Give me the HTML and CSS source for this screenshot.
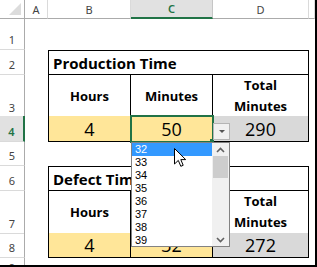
FILE: index.html
```html
<!DOCTYPE html>
<html lang="en">
<head>
    <meta charset="UTF-8">
    <title>Production Time - Drop Down</title>
    <link rel="stylesheet" href="styles.css">
</head>
<body>
    <div class="frame">
        <div class="sheet">
            <!-- column headers -->
            <div class="row row-hd">
                <div class="corner"><span class="corner-tri"></span></div>
                <div class="ch">A</div>
                <div class="ch">B</div>
                <div class="ch ch-active">C</div>
                <div class="ch">D</div>
                <div class="ch"></div>
            </div>

            <div class="row h-r1">
                <div class="rh">1</div>
                <div></div><div></div><div></div><div></div><div></div>
            </div>

            <!-- Production Time -->
            <div class="row h-title">
                <div class="rh">2</div>
                <div></div>
                <div class="tc tc-first tc-top title">Production Time</div>
                <div></div>
            </div>
            <div class="row h-head">
                <div class="rh">3</div>
                <div></div>
                <div class="tc tc-first label">Hours</div>
                <div class="tc label">Minutes</div>
                <div class="tc label">Total<br>Minutes</div>
                <div></div>
            </div>
            <div class="row h-val">
                <div class="rh rh-active">4</div>
                <div></div>
                <div class="tc tc-first val input">4</div>
                <div class="tc val input selected">50</div>
                <div class="tc val calc">290</div>
                <div></div>
            </div>

            <div class="row h-r5">
                <div class="rh">5</div>
                <div></div><div></div><div></div><div></div><div></div>
            </div>

            <!-- Defect Time -->
            <div class="row h-title">
                <div class="rh">6</div>
                <div></div>
                <div class="tc tc-first tc-top title">Defect Time</div>
                <div></div>
            </div>
            <div class="row h-head2">
                <div class="rh">7</div>
                <div></div>
                <div class="tc tc-first label">Hours</div>
                <div class="tc label">Minutes</div>
                <div class="tc label">Total<br>Minutes</div>
                <div></div>
            </div>
            <div class="row h-val2">
                <div class="rh">8</div>
                <div></div>
                <div class="tc tc-first val input">4</div>
                <div class="tc val input">32</div>
                <div class="tc val calc">272</div>
                <div></div>
            </div>
            <div class="row h-r9">
                <div class="rh">9</div>
                <div></div><div></div><div></div><div></div><div></div>
            </div>
        </div>

        <!-- in-cell drop down button for C4 -->
        <div class="dd-btn"><span class="dd-arrow"></span></div>

        <!-- open list -->
        <div class="dd-list">
            <ul class="dd-items">
                <li class="is-hot">32</li>
                <li>33</li>
                <li>34</li>
                <li>35</li>
                <li>36</li>
                <li>37</li>
                <li>38</li>
                <li>39</li>
            </ul>
            <div class="dd-scroll">
                <div class="sb-btn">
                    <svg width="9" height="6" viewBox="0 0 9 6"><path d="M1 5 L4.5 1.5 L8 5" fill="none" stroke="#606060" stroke-width="1.6"/></svg>
                </div>
                <div class="sb-thumb"></div>
                <div class="sb-track"></div>
                <div class="sb-btn">
                    <svg width="9" height="6" viewBox="0 0 9 6"><path d="M1 1 L4.5 4.5 L8 1" fill="none" stroke="#606060" stroke-width="1.6"/></svg>
                </div>
            </div>
        </div>

        <!-- mouse pointer -->
        <svg class="pointer" width="13" height="20" viewBox="0 0 13 20">
            <path d="M0.5 0.5 L0.5 16 L4.3 12.4 L6.8 18.3 L9.2 17.3 L6.8 11.6 L11.7 11.6 Z" fill="#fff" stroke="#000" stroke-width="1" stroke-linejoin="round"/>
        </svg>
    </div>
</body>
</html>
```

FILE: styles.css
```css
* {
    margin: 0;
    padding: 0;
    box-sizing: border-box;
}

body {
    background: #fff;
    font-family: 'Open Sans', Lato, sans-serif;
    color: #000;
}

.frame {
    position: relative;
    width: 317px;
    height: 267px;
    border-right: 2px solid #000;
    border-bottom: 2px solid #000;
    overflow: hidden;
}

.row {
    display: grid;
    grid-template-columns: 25px 23px 83px 82px 96px 1fr;
}

.row-hd { height: 19px; }
.h-r1 { height: 31px; }
.h-title { height: 25px; }
.h-head { height: 41px; }
.h-val { height: 26px; }
.h-r5 { height: 24px; }
.h-head2 { height: 42px; }
.h-val2 { height: 25px; }
.h-r9 { height: 20px; }

.h-title .title {
    grid-column: 3 / 6;
}

/* headers */
.corner {
    position: relative;
    border-right: 1px solid #ababab;
    border-bottom: 1px solid #ababab;
}

.corner-tri {
    position: absolute;
    right: 3px;
    bottom: 3px;
    width: 0;
    height: 0;
    border-left: 12px solid transparent;
    border-bottom: 12px solid #dcdcdc;
}

.ch {
    font-family: 'Noto Sans', sans-serif;
    font-size: 11px;
    color: #444;
    display: flex;
    align-items: center;
    justify-content: center;
    border-right: 1px solid #dadada;
    border-bottom: 1px solid #ababab;
}

.ch-active {
    background: #e1e1e1;
    color: #217346;
    font-weight: 600;
    border-bottom: 2px solid #217346;
    border-right-color: #c6c6c6;
}

.rh {
    font-family: 'Noto Sans', sans-serif;
    font-size: 11px;
    color: #444;
    display: flex;
    align-items: flex-end;
    justify-content: center;
    padding-bottom: 2px;
    border-right: 1px solid #ababab;
    border-bottom: 1px solid #dadada;
}

.rh-active {
    background: #e1e1e1;
    color: #217346;
    font-weight: 600;
    border-right: 2px solid #217346;
}

/* table cells */
.tc {
    border-right: 1px solid #000;
    border-bottom: 1px solid #000;
    display: flex;
    align-items: center;
    justify-content: center;
    text-align: center;
}

.tc-first { border-left: 1px solid #000; }
.tc-top { border-top: 1px solid #000; }

.title {
    justify-content: flex-start;
    padding-left: 4px;
    font-size: 15px;
    font-weight: 700;
}

.label {
    font-size: 13px;
    font-weight: 700;
    line-height: 21px;
}

.val {
    font-size: 18px;
}

.input { background: #ffe699; }
.calc { background: #d9d9d9; }

.selected {
    position: relative;
    outline: 2px solid #217346;
    outline-offset: -1px;
}

.selected::after {
    content: "";
    position: absolute;
    right: -2px;
    bottom: -2px;
    width: 4px;
    height: 4px;
    background: #217346;
}

/* drop down */
.dd-btn {
    position: absolute;
    left: 213px;
    top: 123px;
    width: 17px;
    height: 17px;
    background: #f0f0f0;
    border: 1px solid #b4b4b4;
    display: flex;
    align-items: center;
    justify-content: center;
}

.dd-arrow {
    width: 0;
    height: 0;
    border-left: 3.5px solid transparent;
    border-right: 3.5px solid transparent;
    border-top: 3.5px solid #555;
}

.dd-list {
    position: absolute;
    left: 131px;
    top: 142px;
    width: 99px;
    height: 105px;
    background: #fff;
    border: 1px solid #828282;
    display: flex;
    font-family: 'Liberation Sans', Arial, sans-serif;
    font-size: 11px;
}

.dd-items {
    list-style: none;
    flex: 1;
}

.dd-items li {
    height: 13px;
    line-height: 13px;
    padding-left: 3px;
}

.dd-items li.is-hot {
    background: #3399ff;
    color: #fff;
}

.dd-scroll {
    width: 17px;
    background: #f0f0f0;
    display: flex;
    flex-direction: column;
}

.sb-btn {
    height: 13px;
    display: flex;
    align-items: center;
    justify-content: center;
}

.sb-thumb {
    height: 22px;
    margin: 0 1px;
    background: #cdcdcd;
}

.sb-track { flex: 1; }

.pointer {
    position: absolute;
    left: 174px;
    top: 148px;
}
```
